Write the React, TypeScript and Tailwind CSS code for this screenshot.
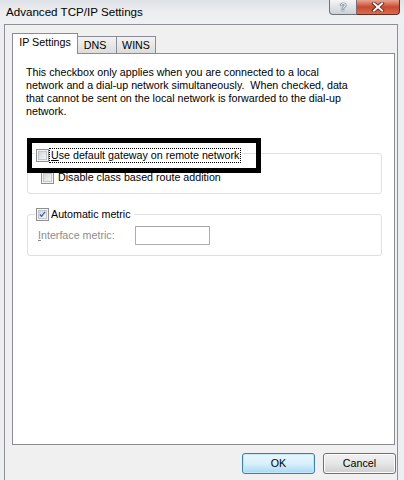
import React from 'react'

function CheckBox({ checked = false }: { checked?: boolean }) {
  return (
    <div className="w-[13px] h-[13px] shrink-0 border border-[#8f8f8f] bg-[#f4f4f4] p-[1px]">
      <div className="w-full h-full border border-[#c3c6cb] bg-gradient-to-br from-[#d3d6da] to-[#f6f6f6] flex items-center justify-center">
        {checked && (
          <svg width="11" height="11" viewBox="0 0 11 11" className="-mt-[1px]">
            <path d="M1.5 5.5 L4 8.5 L9.5 1.5" fill="none" stroke="#3d5ea8" strokeWidth="2" strokeLinejoin="round" />
          </svg>
        )}
      </div>
    </div>
  )
}

export default function App() {
  return (
    <div className="w-[404px] h-[480px] bg-[#eceef1] flex flex-col overflow-hidden font-['Liberation_Sans',Arial,sans-serif] text-[10.7px] text-black">
      {/* title bar */}
      <div className="h-[24px] shrink-0 flex items-start bg-gradient-to-b from-[#dfe2e6] via-[#eceef1] to-[#eef0f2]">
        <span className="pl-[6px] pt-[4px] text-[11.6px] leading-[15px]">Advanced TCP/IP Settings</span>
        <div className="ml-auto mr-[4px] flex">
          <div className="w-[28px] h-[15px] border border-t-0 border-[#6f7378] rounded-bl-[4px] bg-gradient-to-b from-[#f4f5f6] via-[#dfe2e6] to-[#cdd1d7] flex items-center justify-center">
            <span className="text-[11px] leading-none font-bold text-[#e9ebee] [text-shadow:0_0_1px_#333,0_0_1px_#333]">?</span>
          </div>
          <div className="w-[43px] h-[15px] border border-t-0 border-l-0 border-[#6b2a20] rounded-br-[4px] bg-gradient-to-b from-[#e8a493] via-[#c9492f] to-[#d96a4f] flex items-center justify-center">
            <svg width="14" height="10" viewBox="0 0 14 10">
              <path d="M3 1.5 L11 8.5 M11 1.5 L3 8.5" stroke="#5a1c12" strokeWidth="3.6" strokeLinecap="square" />
              <path d="M3 1.5 L11 8.5 M11 1.5 L3 8.5" stroke="#ffffff" strokeWidth="2" strokeLinecap="square" />
            </svg>
          </div>
        </div>
      </div>

      {/* client area */}
      <div className="flex-1 ml-[4px] mr-[6px] border-l border-t border-r border-[#8e9095] bg-[#f0f0f0] flex flex-col pl-[7px] pr-[2px] pt-[8px]">
        {/* tabs */}
        <div className="h-[20px] flex items-end shrink-0">
          <div className="relative z-10 w-[66px] h-[21px] -mb-[1px] bg-white border border-b-0 border-[#898c95] flex items-center justify-center pb-[3px]">
            IP Settings
          </div>
          <div className="w-[40px] h-[17px] -ml-px border border-b-0 border-[#898c95] bg-gradient-to-b from-[#f3f3f3] to-[#dcdcdc] flex items-center justify-center pr-[4px]">
            DNS
          </div>
          <div className="w-[40px] h-[17px] -ml-px border border-b-0 border-[#898c95] bg-gradient-to-b from-[#f3f3f3] to-[#dcdcdc] flex items-center justify-center">
            WINS
          </div>
        </div>

        {/* panel */}
        <div className="flex-1 bg-white border border-[#898c95] pt-[12px] pl-[13px] pr-[12px] relative">
          <p className="leading-[13px] whitespace-pre">
            {'This checkbox only applies when you are connected to a local\nnetwork and a dial-up network simultaneously.  When checked, data\nthat cannot be sent on the local network is forwarded to the dial-up\nnetwork.'}
          </p>

          {/* group 1 */}
          <div className="mt-[35px] ml-[1px] border border-[#dcdfe3] rounded-[3px] pb-[9px]">
            <div className="-mt-[5px] ml-[7px] pl-[1px] pr-[2px] w-fit bg-white flex items-center h-[13px]">
              <CheckBox />
              <span className="ml-[1px] px-[1px] leading-[13px] outline outline-1 outline-dotted outline-black">
                <span className="underline">U</span>se default gateway on remote network
              </span>
            </div>
            <div className="mt-[9px] ml-[13px] flex items-center gap-[4px] h-[13px]">
              <CheckBox />
              <span>Disable class based route addition</span>
            </div>
          </div>

          {/* group 2 */}
          <div className="mt-[20px] ml-[1px] border border-[#dcdfe3] rounded-[3px] pb-[10px]">
            <div className="-mt-[7px] ml-[7px] pl-[1px] pr-[3px] w-fit bg-white flex items-center gap-[2px] h-[13px]">
              <CheckBox checked />
              <span>Automatic metric</span>
            </div>
            <div className="mt-[5px] ml-[10px] flex items-center">
              <span className="w-[97px] text-[#8d8d8d]">
                <span className="underline">I</span>nterface metric:
              </span>
              <div className="w-[75px] h-[19px] border border-[#abadb3] border-t-[#a3a6ab] rounded-[1px] bg-white" />
            </div>
          </div>

          {/* annotation box */}
          <div className="absolute left-[14px] top-[84px] w-[234px] h-[35px] border-[5px] border-black pointer-events-none" />
        </div>

        {/* buttons */}
        <div className="h-[21px] mt-[8px] mb-[6px] -mr-[1px] flex justify-end gap-[8px] shrink-0">
          <button className="w-[73px] h-[21px] rounded-[3px] border border-[#3c7fb1] bg-gradient-to-b from-[#eaf6fd] via-[#d9f0fc] to-[#a7d9f5] shadow-[inset_0_0_0_1px_#c6e6f8]">
            OK
          </button>
          <button className="w-[73px] h-[21px] rounded-[3px] border border-[#707070] bg-gradient-to-b from-[#f2f2f2] via-[#e6e6e6] to-[#cfcfcf] shadow-[inset_0_0_0_1px_#fcfcfc]">
            Cancel
          </button>
        </div>
      </div>
    </div>
  )
}
